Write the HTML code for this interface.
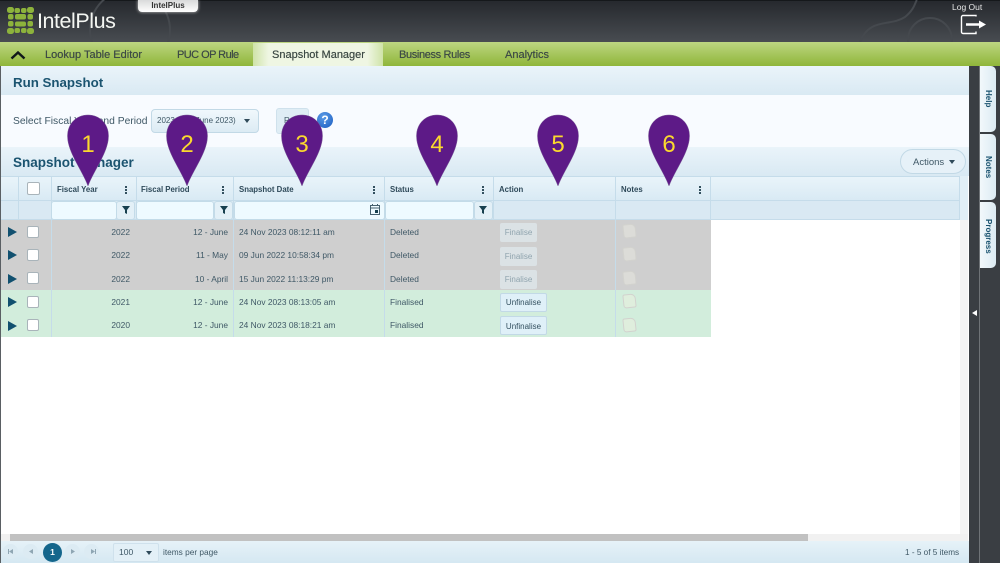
<!DOCTYPE html>
<html><head><meta charset="utf-8"><style>
*{box-sizing:border-box}
html,body{margin:0;padding:0;width:1000px;height:563px;overflow:hidden;background:#fff;font-family:"Liberation Sans",sans-serif;color:#33505f}
.a{position:absolute;white-space:nowrap}
.t{font-size:8.4px;color:#3f5866;line-height:10px}
.h{font-size:7.8px;font-weight:bold;color:#2f4a5a;line-height:10px}
.f{background:#eefaff;border:1px solid #c3dbe8;border-radius:3px;height:19px;top:201px}
.fb{background:#e3f0f7;border:1px solid #c3dbe8;border-radius:3px;height:19px;top:201px;width:19px}
.cb{width:12px;height:12px;background:#fff;border:1px solid #a9b4ba;border-radius:2px;left:27px}
.tri{width:0;height:0;border-left:9px solid #11506f;border-top:5.5px solid transparent;border-bottom:5.5px solid transparent;left:8px}
.dots{width:2px;height:2px;background:#33505f;box-shadow:0 3px 0 #33505f,0 -3px 0 #33505f;top:189px}
.v{width:1px;background:#c5dcea}
.btn{font-size:8px;line-height:20px;text-align:center;border-radius:2px;height:19px;left:500px}
.nav{font-size:11px;color:#3d4a45;top:49px;line-height:13px;text-shadow:0 0 .4px #3d4a45}
.note{width:13px;height:14px;left:623px;background:#dcdcd8;border:1px solid #d2d2ce;border-radius:2px 5px 2px 3px;transform:rotate(-6deg)}
</style></head><body>
<div class="a" style="left:0;top:0;width:1000px;height:42px;background:linear-gradient(#26292e,#484c51);border-top:1px solid #15181b"></div>
<svg class="a" style="left:0;top:0" width="1000" height="42" fill="none" stroke="#45494e" stroke-width="2"><circle cx="130" cy="30" r="40"/><circle cx="930" cy="40" r="22"/><path d="M860 42c10-25 30-15 45-25 10-8 10-15 12-17"/></svg>
<svg class="a" style="left:7px;top:7px" width="27" height="27" fill="#8db33c"><rect x="0" y="0" width="7" height="6" rx="2.500"/><rect x="7.500" y="1" width="5.500" height="5" rx="2"/><rect x="14" y="1" width="5.500" height="5" rx="2"/><rect x="20" y="0" width="7" height="6" rx="2.500"/><rect x="1" y="7" width="5.500" height="5.500" rx="2"/><rect x="8" y="7" width="11" height="5.500" rx="2"/><rect x="20.500" y="7" width="5.500" height="5.500" rx="2"/><rect x="1" y="14" width="5.500" height="5.500" rx="2"/><rect x="8" y="14.500" width="11" height="5" rx="2"/><rect x="20.500" y="14" width="5.500" height="5.500" rx="2"/><rect x="0" y="21" width="7" height="6" rx="2.500"/><rect x="7.500" y="21" width="5.500" height="5" rx="2"/><rect x="14" y="21" width="5.500" height="5" rx="2"/><rect x="20" y="21" width="7" height="6" rx="2.500"/></svg>
<div class="a" style="left:37px;top:7px;font-size:21.500px;line-height:28px;color:#f4f6f2;letter-spacing:-.45px">IntelPlus</div>
<div class="a" style="left:138px;top:0;width:60px;height:12px;background:linear-gradient(#d9dadb,#fff);border-radius:0 0 4px 4px;font-size:8px;font-weight:bold;line-height:11px;text-align:center;color:#333;box-shadow:0 0 3px #ccc">IntelPlus</div>
<div class="a" style="left:952px;top:2px;font-size:8.500px;line-height:10px;color:#e8e8e8">Log Out</div>
<svg class="a" style="left:960px;top:14px" width="28" height="22" fill="none" stroke="#fff" stroke-width="1.400"><path d="M16 2.500V1.500H3a1.500 1.500 0 0 0-1.500 1.500v15a1.500 1.500 0 0 0 1.500 1.500h13v-2"/><path d="M6 10.500h14" stroke-width="2.500"/><path d="M19 6.500l7 4-7 4z" fill="#fff" stroke="none"/></svg>

<div class="a" style="left:0;top:42px;width:1000px;height:24px;background:linear-gradient(#bdd681,#8fb63a)"></div>
<svg class="a" style="left:10px;top:50px" width="16" height="10" fill="none" stroke="#10181a" stroke-width="2.400"><path d="M1.500 8.500L8 2.500l6.500 6"/></svg>
<div class="a" style="left:253px;top:43px;width:130px;height:23px;background:linear-gradient(90deg,#cfe3a8,#eff6e3 12%,#eff6e3 88%,#cfe3a8)"></div>
<div class="a nav" style="left:45px">Lookup Table Editor</div>
<div class="a nav" style="left:177px;letter-spacing:-.55px">PUC OP Rule</div>
<div class="a nav" style="left:272px">Snapshot Manager</div>
<div class="a nav" style="left:399px;letter-spacing:-.35px">Business Rules</div>
<div class="a nav" style="left:505px">Analytics</div>

<div class="a" style="left:0;top:66px;width:969px;height:497px;background:#fff;border-left:1px solid #5a5f63"></div>
<div class="a" style="left:1px;top:66px;width:968px;height:29px;background:linear-gradient(#eaf4fa,#d9e9f3)"></div>
<div class="a" style="left:13px;top:75px;font-size:13.300px;font-weight:bold;line-height:16px;color:#1b5470">Run Snapshot</div>
<div class="a" style="left:1px;top:95px;width:968px;height:52px;background:#f8fbff"></div>
<div class="a" style="left:13px;top:115px;font-size:10.300px;line-height:13px;color:#3f5866">Select Fiscal Year and Period</div>
<div class="a" style="left:151px;top:109px;width:108px;height:24px;background:linear-gradient(#f0f8fc,#dcebf4);border:1px solid #c2d9e6;border-radius:4px;font-size:8px;line-height:22px;padding-left:5px;color:#3f5866">2023 - 12 (June 2023)</div>
<div class="a" style="left:244px;top:119px;width:0;height:0;border-top:4px solid #2f4a5a;border-left:3px solid transparent;border-right:3px solid transparent"></div>
<div class="a" style="left:276px;top:108px;width:33px;height:26px;background:#dfedf5;border:1px solid #cfe1ec;border-radius:3px;font-size:8px;line-height:24px;padding-left:7px;color:#3f5866">Run</div>
<div class="a" style="left:317px;top:112px;width:16px;height:16px;border-radius:50%;background:radial-gradient(circle at 40% 30%,#5b9be6,#1a5cc0);color:#fff;font-size:12px;font-weight:bold;line-height:16px;text-align:center">?</div>

<div class="a" style="left:1px;top:147px;width:968px;height:29px;background:linear-gradient(#eaf4fa,#d9e9f3)"></div>
<div class="a" style="left:13px;top:155px;font-size:13.500px;font-weight:bold;line-height:16px;color:#1b5470">Snapshot Manager</div>
<div class="a" style="left:900px;top:149px;width:66px;height:25px;background:#e6f1f8;border:1px solid #c2d9e6;border-radius:13px;font-size:9.500px;line-height:25px;padding-left:12px;color:#3f5866">Actions</div>
<div class="a" style="left:949px;top:160px;width:0;height:0;border-top:4px solid #2f4a5a;border-left:3px solid transparent;border-right:3px solid transparent"></div>

<div class="a" style="left:1px;top:176px;width:959px;height:24px;background:linear-gradient(#e9f4fa,#d9eaf4);border-top:1px solid #c5dcea"></div>
<div class="a" style="left:1px;top:200px;width:959px;height:20px;background:#d9e9f3;border-top:1px solid #c5dcea;border-bottom:1px solid #c5dcea"></div>
<div class="a" style="left:1px;top:220px;width:710px;height:70px;background:#cfcfcf"></div>
<div class="a" style="left:1px;top:290px;width:710px;height:47px;background:#d2eddc"></div>
<div class="a" style="left:960px;top:176px;width:8px;height:44px;background:#e2eff6"></div>
<div class="a" style="left:960px;top:220px;width:8px;height:314px;background:#f4f4f4"></div>
<div class="a v" style="left:51px;top:176px;height:161px"></div>
<div class="a v" style="left:136px;top:176px;height:44px"></div>
<div class="a v" style="left:233px;top:176px;height:161px"></div>
<div class="a v" style="left:384px;top:176px;height:161px"></div>
<div class="a v" style="left:493px;top:176px;height:44px"></div>
<div class="a v" style="left:615px;top:176px;height:161px"></div>
<div class="a v" style="left:710px;top:176px;height:44px"></div>
<div class="a v" style="left:959px;top:176px;height:44px"></div>
<div class="a v" style="left:18px;top:176px;height:44px"></div>

<div class="a cb" style="top:182px;width:13px;height:13px"></div>
<div class="a h" style="left:57px;top:185px">Fiscal Year</div>
<div class="a h" style="left:141px;top:185px">Fiscal Period</div>
<div class="a h" style="left:239px;top:185px">Snapshot Date</div>
<div class="a h" style="left:390px;top:185px">Status</div>
<div class="a h" style="left:499px;top:185px">Action</div>
<div class="a h" style="left:621px;top:185px">Notes</div>
<div class="a dots" style="left:125px"></div><div class="a dots" style="left:222px"></div><div class="a dots" style="left:373px"></div><div class="a dots" style="left:482px"></div><div class="a dots" style="left:699px"></div>

<div class="a f" style="left:51px;width:66px"></div><div class="a fb" style="left:116px"></div>
<div class="a f" style="left:136px;width:78px"></div><div class="a fb" style="left:214px"></div>
<div class="a f" style="left:234px;width:151px"></div>
<div class="a f" style="left:385px;width:89px"></div><div class="a fb" style="left:474px"></div>
<svg class="a" style="left:0;top:200px" width="500" height="20" fill="#17404f"><path d="M122 6h8l-3 4v4l-2-1v-3z"/><path d="M220 6h8l-3 4v4l-2-1v-3z"/><path d="M479 6h8l-3 4v4l-2-1v-3z"/><path d="M370.500 5.500h9v9h-9zM370.500 8h9M372.500 4v2M377.500 4v2" fill="none" stroke="#46606e"/><rect x="375" y="10" width="3" height="3"/></svg>

<div class="a tri" style="top:227px"></div><div class="a cb" style="top:226px"></div>
<div class="a tri" style="top:250px"></div><div class="a cb" style="top:249px"></div>
<div class="a tri" style="top:274px"></div><div class="a cb" style="top:272px"></div>
<div class="a tri" style="top:297px"></div><div class="a cb" style="top:296px"></div>
<div class="a tri" style="top:321px"></div><div class="a cb" style="top:319px"></div>

<div class="a t" style="right:870px;top:227px">2022</div><div class="a t" style="right:772px;top:227px">12 - June</div><div class="a t" style="left:239px;top:227px">24 Nov 2023 08:12:11 am</div><div class="a t" style="left:390px;top:227px">Deleted</div>
<div class="a t" style="right:870px;top:250px">2022</div><div class="a t" style="right:772px;top:250px">11 - May</div><div class="a t" style="left:239px;top:250px">09 Jun 2022 10:58:34 pm</div><div class="a t" style="left:390px;top:250px">Deleted</div>
<div class="a t" style="right:870px;top:274px">2022</div><div class="a t" style="right:772px;top:274px">10 - April</div><div class="a t" style="left:239px;top:274px">15 Jun 2022 11:13:29 pm</div><div class="a t" style="left:390px;top:274px">Deleted</div>
<div class="a t" style="right:870px;top:297px">2021</div><div class="a t" style="right:772px;top:297px">12 - June</div><div class="a t" style="left:239px;top:297px">24 Nov 2023 08:13:05 am</div><div class="a t" style="left:390px;top:297px">Finalised</div>
<div class="a t" style="right:870px;top:320px">2020</div><div class="a t" style="right:772px;top:320px">12 - June</div><div class="a t" style="left:239px;top:320px">24 Nov 2023 08:18:21 am</div><div class="a t" style="left:390px;top:320px">Finalised</div>

<div class="a btn" style="top:223px;width:37px;background:#dbe2e5;color:#90a4ae">Finalise</div>
<div class="a btn" style="top:247px;width:37px;background:#dbe2e5;color:#90a4ae">Finalise</div>
<div class="a btn" style="top:270px;width:37px;background:#dbe2e5;color:#90a4ae">Finalise</div>
<div class="a btn" style="top:293px;width:47px;background:#dff0f8;border:1px solid #c2d9e6;color:#33505f;line-height:18px">Unfinalise</div>
<div class="a btn" style="top:316px;width:47px;background:#dff0f8;border:1px solid #c2d9e6;color:#33505f;line-height:19px">Unfinalise</div>
<div class="a note" style="top:224px"></div><div class="a note" style="top:247px"></div><div class="a note" style="top:271px"></div>
<div class="a note" style="top:294px;background:#dfeedd"></div><div class="a note" style="top:318px;background:#dfeedd"></div>

<svg class="a" style="left:0;top:110px" width="720" height="80">
<g fill="#5d1a87" stroke="#7b5a97" stroke-width=".5"><path d="M67.500 26C67.500 14 76 5 88 5s20.500 9 20.500 21C108.500 42 94 60 88 76 82 60 67.500 42 67.500 26z"/><path d="M166.500 26C166.500 14 175 5 187 5s20.500 9 20.500 21C207.500 42 193 60 187 76 181 60 166.500 42 166.500 26z"/><path d="M281.500 26C281.500 14 290 5 302 5s20.500 9 20.500 21C322.500 42 308 60 302 76 296 60 281.500 42 281.500 26z"/><path d="M416.500 26C416.500 14 425 5 437 5s20.500 9 20.500 21C457.500 42 443 60 437 76 431 60 416.500 42 416.500 26z"/><path d="M537.500 26C537.500 14 546 5 558 5s20.500 9 20.500 21C578.500 42 564 60 558 76 552 60 537.500 42 537.500 26z"/><path d="M648.500 26C648.500 14 657 5 669 5s20.500 9 20.500 21C689.500 42 675 60 669 76 663 60 648.500 42 648.500 26z"/></g>
<g fill="#fbd92e" font-family="Liberation Sans" font-size="24" text-anchor="middle"><text x="88" y="42">1</text><text x="187" y="42">2</text><text x="302" y="42">3</text><text x="437" y="42">4</text><text x="558" y="42">5</text><text x="669" y="42">6</text></g></svg>

<div class="a" style="left:1px;top:534px;width:967px;height:7px;background:#f1f1f1"></div>
<div class="a" style="left:10px;top:534px;width:798px;height:7px;background:#c1c1c1"></div>
<div class="a" style="left:1px;top:541px;width:968px;height:22px;background:linear-gradient(#e6f2f8,#d5e8f2)"></div>
<div class="a" style="left:3px;top:544px;width:15px;height:15px;border-radius:50%;background:#dcebf3"></div>
<div class="a" style="left:23px;top:544px;width:15px;height:15px;border-radius:50%;background:#dcebf3"></div>
<div class="a" style="left:65px;top:544px;width:15px;height:15px;border-radius:50%;background:#dcebf3"></div>
<div class="a" style="left:84px;top:544px;width:15px;height:15px;border-radius:50%;background:#dcebf3"></div>
<svg class="a" style="left:0;top:544px" width="100" height="15" fill="#8fa6b3"><path d="M8 5h1v5H8zM13 5v5l-4-2.500zM33 5v5l-4-2.500zM71 5v5l4-2.500zM91 5v5l4-2.500zM95 5h1v5h-1z"/></svg>
<div class="a" style="left:43px;top:543px;width:19px;height:19px;border-radius:50%;background:#14668c;color:#fff;font-size:8.500px;font-weight:bold;line-height:19px;text-align:center">1</div>
<div class="a" style="left:113px;top:543px;width:46px;height:19px;background:#e3f0f7;border:1px solid #cfe1ec;border-radius:2px;font-size:8.500px;line-height:17px;padding-left:5px;color:#3f5866">100</div>
<div class="a" style="left:146px;top:551px;width:0;height:0;border-top:4px solid #2f4a5a;border-left:3px solid transparent;border-right:3px solid transparent"></div>
<div class="a" style="left:163px;top:547px;font-size:8.300px;line-height:11px;color:#3f5866">items per page</div>
<div class="a" style="left:905px;top:547px;font-size:8.200px;line-height:11px;color:#3f5866">1 - 5 of 5 items</div>

<div class="a" style="left:969px;top:66px;width:31px;height:497px;background:#3a3e43"></div>
<div class="a" style="left:979px;top:66px;width:1px;height:497px;background:#6f7377"></div>
<div class="a" style="left:980px;top:66px;width:16px;height:66px;background:linear-gradient(90deg,#f2f8fb,#dcebf3);border-radius:0 5px 5px 0"></div>
<div class="a" style="left:980px;top:134px;width:16px;height:66px;background:linear-gradient(90deg,#f2f8fb,#dcebf3);border-radius:0 5px 5px 0"></div>
<div class="a" style="left:980px;top:202px;width:16px;height:66px;background:linear-gradient(90deg,#f2f8fb,#dcebf3);border-radius:0 5px 5px 0"></div>
<div class="a" style="left:983px;top:90px;font-size:8px;font-weight:bold;line-height:10px;color:#1b5470;writing-mode:vertical-rl">Help</div>
<div class="a" style="left:983px;top:156px;font-size:8px;font-weight:bold;line-height:10px;color:#1b5470;writing-mode:vertical-rl">Notes</div>
<div class="a" style="left:983px;top:219px;font-size:8px;font-weight:bold;line-height:10px;color:#1b5470;writing-mode:vertical-rl">Progress</div>
<div class="a" style="left:972px;top:310px;width:0;height:0;border-right:5px solid #fff;border-top:3.500px solid transparent;border-bottom:3.500px solid transparent"></div>
</body></html>
